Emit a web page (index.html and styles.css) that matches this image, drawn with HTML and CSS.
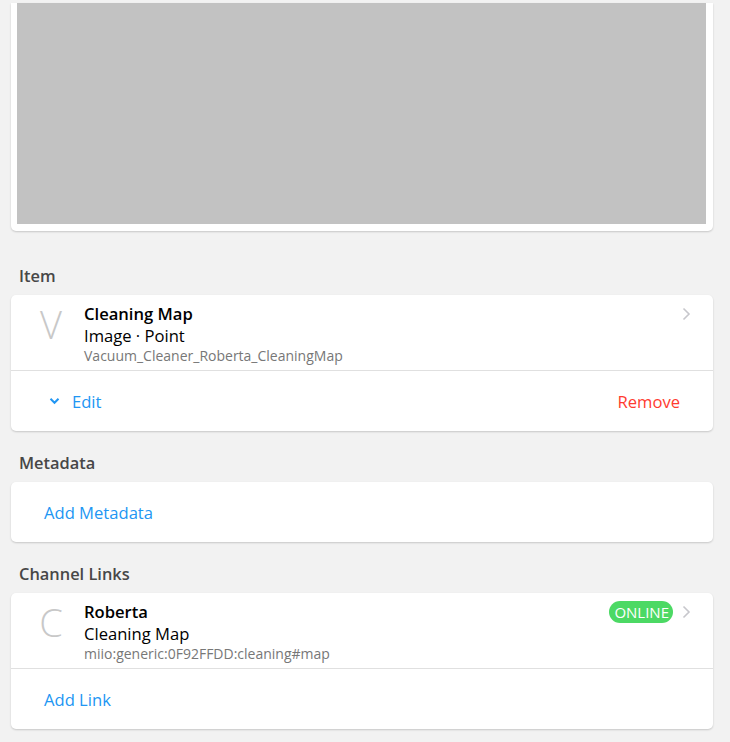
FILE: index.html
```html
<!DOCTYPE html>
<html>
<head>
<meta charset="utf-8">
<link rel="stylesheet" href="styles.css">
</head>
<body>
<div class="page">
  <div class="card card-image">
    <div class="image-placeholder"></div>
  </div>

  <div class="block-title block-title-first">Item</div>
  <div class="card">
    <div class="media-row">
      <div class="media-letter">V</div>
      <div class="media-inner">
        <div class="media-title-row">
          <div class="media-title">Cleaning Map</div>
        </div>
        <div class="media-subtitle">Image · Point</div>
        <div class="media-footer">Vacuum_Cleaner_Roberta_CleaningMap</div>
      </div>
      <svg class="chevron-right" width="9" height="14" viewBox="0 0 9 14"><path d="M1.5 1.5 L7 7 L1.5 12.5" fill="none" stroke="#c7c7cc" stroke-width="1.6"/></svg>
    </div>
    <div class="action-row">
      <a class="link link-edit"><svg class="chevron-down" width="11" height="8" viewBox="0 0 11 8"><path d="M1.5 1.8 L5.5 5.8 L9.5 1.8" fill="none" stroke="#2196f3" stroke-width="2"/></svg>Edit</a>
      <a class="link link-remove">Remove</a>
    </div>
  </div>

  <div class="block-title">Metadata</div>
  <div class="card">
    <div class="action-row">
      <a class="link">Add Metadata</a>
    </div>
  </div>

  <div class="block-title">Channel Links</div>
  <div class="card">
    <div class="media-row">
      <div class="media-letter">C</div>
      <div class="media-inner">
        <div class="media-title-row">
          <div class="media-title">Roberta</div>
          <span class="badge">ONLINE</span>
        </div>
        <div class="media-subtitle">Cleaning Map</div>
        <div class="media-footer">miio:generic:0F92FFDD:cleaning#map</div>
      </div>
      <svg class="chevron-right" width="9" height="14" viewBox="0 0 9 14"><path d="M1.5 1.5 L7 7 L1.5 12.5" fill="none" stroke="#c7c7cc" stroke-width="1.6"/></svg>
    </div>
    <div class="action-row">
      <a class="link">Add Link</a>
    </div>
  </div>
</div>
</body>
</html>
```

FILE: styles.css
```css
html, body {
  margin: 0;
  padding: 0;
  background: #f2f2f2;
}
body {
  font-family: "Open Sans", "Noto Sans", sans-serif;
  color: #000;
}
.page {
  padding: 3px 17px 20px 11px;
}
.card {
  background: #fff;
  border-radius: 5px;
  box-shadow: 0 1px 2px rgba(0,0,0,0.18);
}
.card-image {
  padding: 0 7px 7px 6px;
  border-top-left-radius: 0;
  border-top-right-radius: 0;
}
.image-placeholder {
  height: 221px;
  background: #c2c2c2;
}
.block-title {
  margin: 22px 0 9px 8px;
  font-size: 16.4px;
  line-height: 20px;
  font-weight: 600;
  color: #474747;
}
.block-title-first {
  margin-top: 35px;
}
.media-row {
  display: flex;
  align-items: flex-start;
  padding: 8px 22px 8px 17px;
  border-bottom: 1px solid #e0e0e0;
  height: 59px;
}
.media-letter {
  width: 46px;
  text-align: center;
  font-size: 38px;
  line-height: 44px;
  font-weight: 300;
  color: #c8c8c8;
  margin-top: -1px;
}
.media-inner {
  flex: 1;
  margin-left: 10px;
}
.media-title-row {
  display: flex;
  align-items: center;
  justify-content: space-between;
  height: 22px;
}
.media-title {
  font-size: 16.6px;
  font-weight: 600;
  line-height: 22px;
}
.media-subtitle {
  font-size: 16.6px;
  line-height: 21px;
}
.media-footer {
  font-size: 14px;
  line-height: 19px;
  color: #777;
}
.badge {
  background: #4cd964;
  color: #fff;
  font-size: 15px;
  line-height: 22px;
  height: 22px;
  padding: 0 4px 0 5px;
  border-radius: 11px;
  margin-right: 9px;
}
.chevron-right {
  margin-top: 4px;
  flex-shrink: 0;
}
.action-row {
  display: flex;
  align-items: center;
  justify-content: space-between;
  height: 60px;
  padding: 0 33px 0 33px;
}
.link {
  color: #2196f3;
  font-size: 16.6px;
  display: flex;
  align-items: center;
}
.link-edit {
  margin-left: 5px;
}
.chevron-down {
  margin-right: 12px;
}
.link-remove {
  color: #ff3b30;
}
```
